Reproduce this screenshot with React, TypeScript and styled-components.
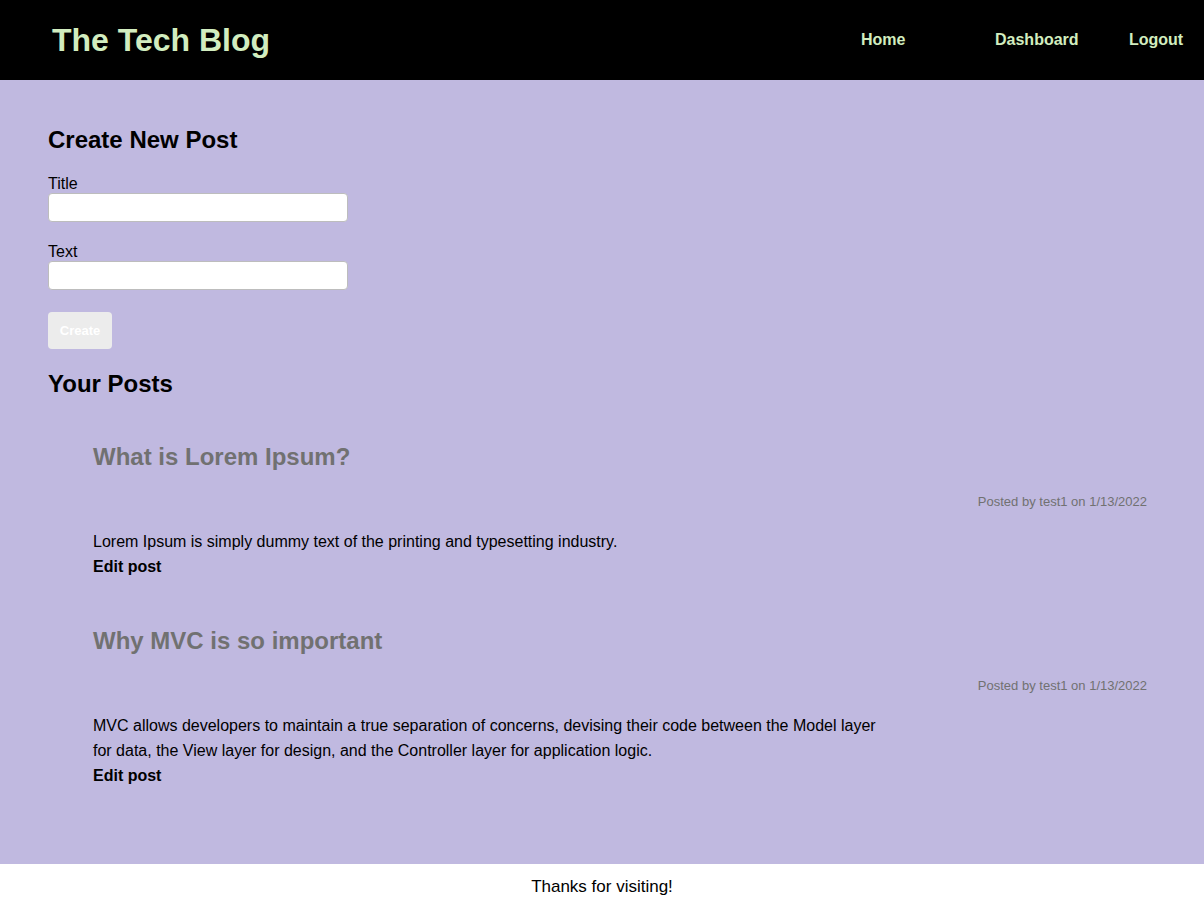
import React from "react";
import styled, { createGlobalStyle } from "styled-components";

const Global = createGlobalStyle`
  html, body { margin: 0; padding: 0; }
  body { font-family: "Liberation Sans", Arial, Helvetica, sans-serif; background: #fff; color: #000; }
  * { box-sizing: border-box; }
`;

const Header = styled.header`
  height: 80px;
  background: #000;
  display: flex;
  align-items: center;
  justify-content: space-between;
  padding: 0 0 0 52px;
`;

const Logo = styled.h1`
  margin: 0;
  font-size: 32px;
  font-weight: 700;
  color: #d2edbf;
`;

const Nav = styled.nav`
  display: flex;
  align-items: center;
`;

const NavLink = styled.a<{ $w: number }>`
  width: ${(p) => p.$w}px;
  font-size: 16px;
  font-weight: 700;
  color: #d2edbf;
  text-decoration: none;
`;

const Main = styled.main`
  background: #c0b9e0;
  min-height: 784px;
  padding: 46px 48px 40px;
`;

const SectionTitle = styled.h2`
  margin: 0;
  font-size: 24px;
  font-weight: 700;
  line-height: 28px;
`;

const Form = styled.form`
  display: flex;
  flex-direction: column;
  align-items: flex-start;
  margin-top: 20px;
`;

const Field = styled.div`
  display: flex;
  flex-direction: column;
  margin-bottom: 20px;
`;

const Label = styled.label`
  font-size: 16px;
  line-height: 19px;
`;

const Input = styled.input`
  width: 300px;
  height: 29px;
  border: 1px solid #bdbdbd;
  border-radius: 4px;
  background: #fff;
`;

const Button = styled.button`
  width: 64px;
  height: 37px;
  border: none;
  border-radius: 4px;
  background: #ececec;
  color: #fff;
  font-family: inherit;
  font-size: 13px;
  font-weight: 700;
  padding: 0;
  margin-top: 2px;
  margin-bottom: 21px;
`;

const PostList = styled.div`
  padding: 45px 9px 0 45px;
  display: flex;
  flex-direction: column;
  gap: 47px;
`;

const Post = styled.article`
  display: flex;
  flex-direction: column;
`;

const PostTitle = styled.h3`
  margin: 0;
  font-size: 24px;
  font-weight: 700;
  color: #717171;
  line-height: 28px;
`;

const Meta = styled.div`
  align-self: flex-end;
  font-size: 13px;
  color: #717171;
  margin-top: 23px;
`;

const Body = styled.p`
  margin: 20px 0 0;
  max-width: 800px;
  font-size: 16px;
  line-height: 25px;
`;

const Edit = styled.a`
  font-size: 16px;
  font-weight: 700;
  line-height: 26px;
  color: #000;
`;

const Footer = styled.footer`
  height: 46px;
  display: flex;
  justify-content: center;
  align-items: center;
  font-size: 17px;
`;

const posts = [
  {
    title: "What is Lorem Ipsum?",
    body: "Lorem Ipsum is simply dummy text of the printing and typesetting industry.",
  },
  {
    title: "Why MVC is so important",
    body: "MVC allows developers to maintain a true separation of concerns, devising their code between the Model layer for data, the View layer for design, and the Controller layer for application logic.",
  },
];

export default function App() {
  return (
    <>
      <Global />
      <Header>
        <Logo>The Tech Blog</Logo>
        <Nav>
          <NavLink $w={134}>Home</NavLink>
          <NavLink $w={134}>Dashboard</NavLink>
          <NavLink $w={75}>Logout</NavLink>
        </Nav>
      </Header>
      <Main>
        <SectionTitle>Create New Post</SectionTitle>
        <Form>
          <Field>
            <Label>Title</Label>
            <Input />
          </Field>
          <Field>
            <Label>Text</Label>
            <Input />
          </Field>
          <Button type="button">Create</Button>
        </Form>
        <SectionTitle>Your Posts</SectionTitle>
        <PostList>
          {posts.map((p) => (
            <Post key={p.title}>
              <PostTitle>{p.title}</PostTitle>
              <Meta>Posted by test1 on 1/13/2022</Meta>
              <Body>{p.body}</Body>
              <Edit>Edit post</Edit>
            </Post>
          ))}
        </PostList>
      </Main>
      <Footer>Thanks for visiting!</Footer>
    </>
  );
}
